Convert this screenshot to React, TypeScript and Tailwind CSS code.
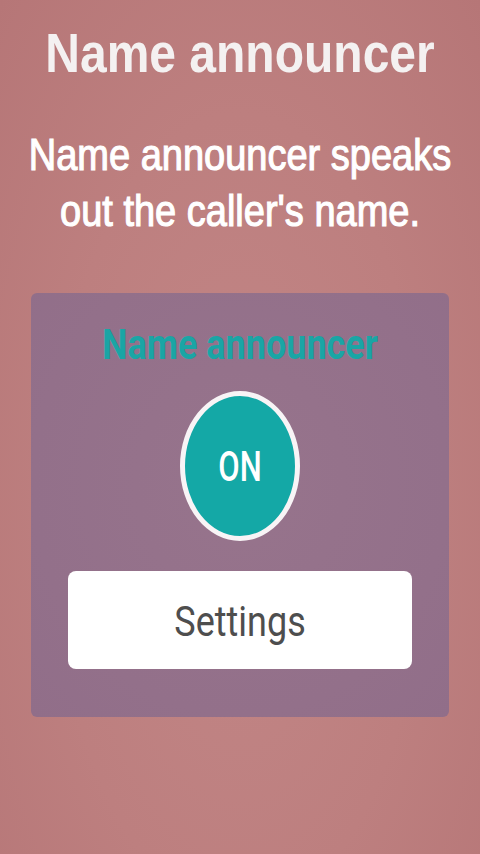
export default function App() {
  return (
    <div className="h-[854px] w-full overflow-hidden bg-[radial-gradient(ellipse_at_50%_60%,#c28686_0%,#bd7f7f_55%,#b67677_100%)] font-['Liberation_Sans',Arial,sans-serif]">
      <div className="pt-[29px] h-[48px] box-content flex justify-center">
        <h1 className="text-[48px] leading-[48px] font-bold text-[#f4f1f1] scale-y-[1.17] whitespace-nowrap">
          Name announcer
        </h1>
      </div>

      <p className="mt-[59px] h-[93px] text-center text-[38px] leading-[46.5px] text-white scale-y-[1.18] [-webkit-text-stroke:1px_#fff]">
        Name announcer speaks
        <br />
        out the caller's name.
      </p>

      <div className="mt-[64px] mx-[31px] h-[424px] rounded-[6px] bg-[radial-gradient(ellipse_at_50%_45%,#97748c_0%,#93708a_70%,#916e89_100%)] px-[37px] pt-[34px] flex flex-col items-center font-['Roboto',sans-serif]">
        <div className="h-[36px] flex items-center justify-center">
          <span className="text-[36px] leading-[36px] font-bold text-[#1aa5a5] scale-y-[1.2] whitespace-nowrap">
            Name announcer
          </span>
        </div>

        <button
          type="button"
          className="mt-[28px] w-[120px] h-[150px] rounded-[50%] border-[5px] border-[#f8f4f6] bg-[#14a8a6] flex items-center justify-center"
        >
          <span className="text-[31px] leading-[31px] font-medium text-white scale-y-[1.4]">
            ON
          </span>
        </button>

        <button
          type="button"
          className="mt-[30px] w-full h-[98px] rounded-[8px] bg-white flex items-center justify-center"
        >
          <span className="mt-[4px] text-[36px] leading-[36px] text-[#4e4e4e] scale-y-[1.2]">
            Settings
          </span>
        </button>
      </div>
    </div>
  );
}
